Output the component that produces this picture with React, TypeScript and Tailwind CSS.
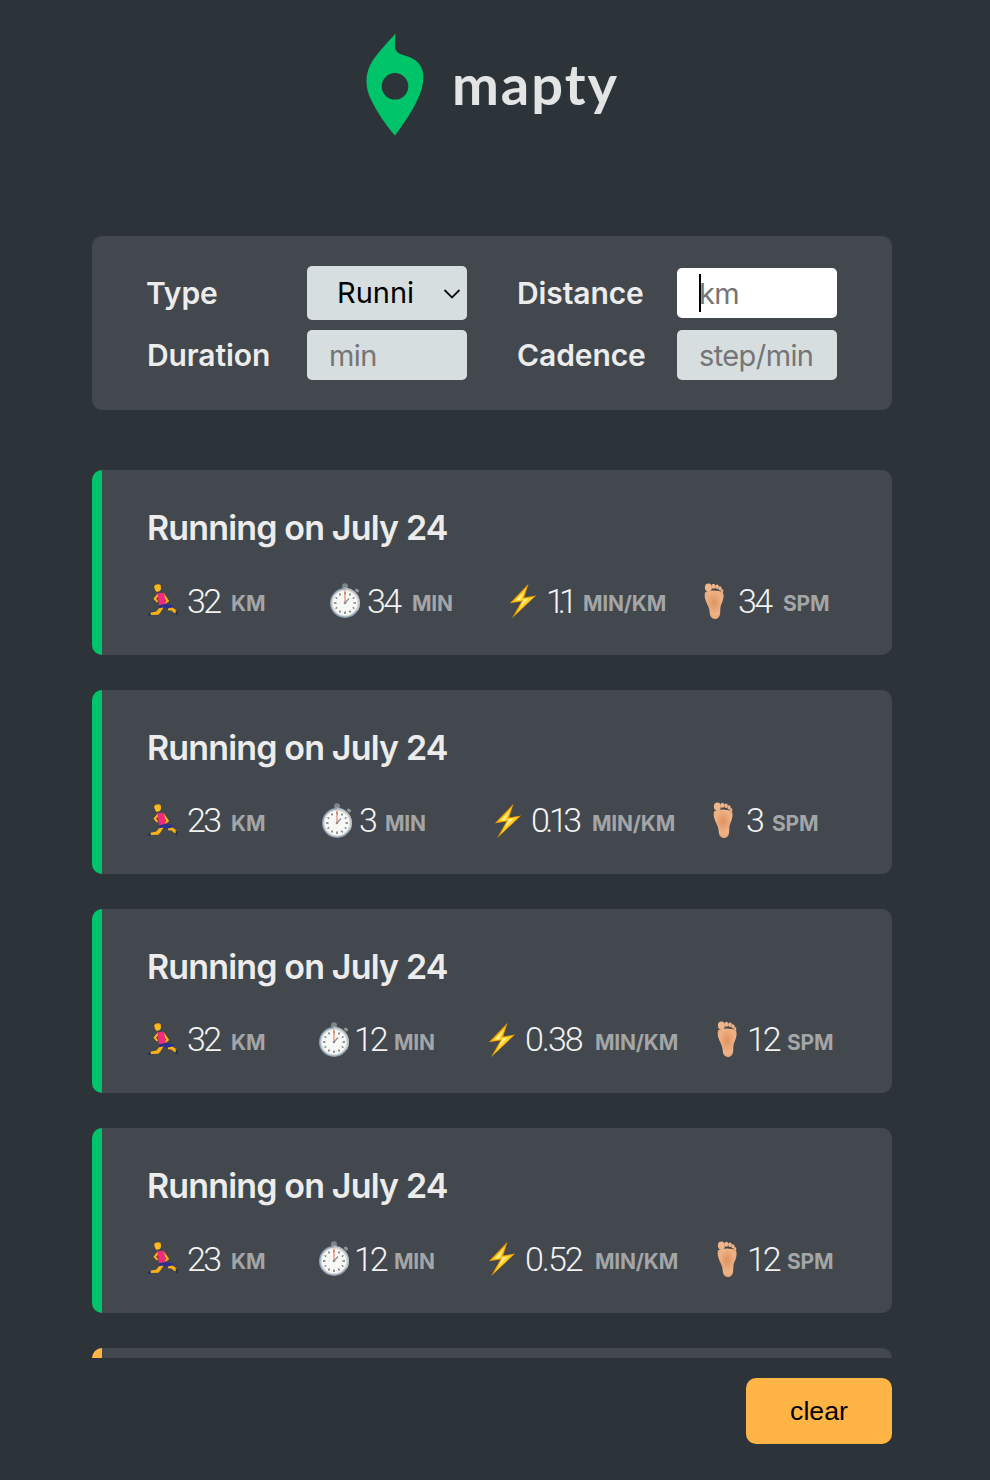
import React from "react";

const Runner = () => (
  <svg width="32" height="36" viewBox="0 0 32 36" className="block">
    <path d="M7 3.500c1-2.600 5.600-3.200 7-.8l-.4 2.600-.6 2.800-3.600.8-1.400-2.600z" fill="#f5a70f" />
    <circle cx="10.800" cy="5.200" r="3" fill="#fdb91e" />
    <path d="M10.600 10.400L6.400 15.800 9.800 19.600l1.400-1.200-2-2.800 3-3.200z" fill="#fbb117" />
    <path d="M17 10.600l5.200 7.400-4 3.200-1-1.400 2-2-3.400-5.200z" fill="#fbb117" />
    <path d="M10.400 10.200l6.600-.4 1.800 11.400-6.800 1.200z" fill="#ee2b7c" />
    <path d="M12 22.200l7-1.200 7.400 1.600.4 2.800-7.600.2-2.600-.4-4.200 1.200z" fill="#2b2f8f" />
    <path d="M21 25.400l4.600-.8 4.400 3.200-.2 2.400-2.400-.2-3-2.400-3.400-.4z" fill="#fbb117" />
    <path d="M12 25.200l4.600-.8-3.400 5.400-1.800 2-7.800.2-.2-2.200 6-1.200z" fill="#fbb117" />
    <path d="M3.400 29.800l.4 3.200-3-.2-.6-1.400z" fill="#2a3352" />
    <path d="M28.600 27.400l2 .4 .4 4.600-2.200-.6z" fill="#2a3352" />
  </svg>
);

const Stopwatch = () => (
  <svg width="32" height="36" viewBox="0 0 32 36" className="block">
    <circle cx="16" cy="3.200" r="3" fill="#7f8488" />
    <rect x="14.600" y="4" width="2.800" height="3" fill="#9a9ea1" />
    <rect x="26" y="6" width="4" height="3" rx="1" transform="rotate(40 28 7.500)" fill="#8f9498" />
    <circle cx="16" cy="20" r="15" fill="#8ba0b3" />
    <path d="M16 5a15 15 0 0 1 15 15 15 15 0 0 1-2 7.500L16 20z" fill="#b9bec2" />
    <circle cx="16" cy="20" r="13.600" fill="#dadad8" />
    <circle cx="16" cy="20" r="12.200" fill="#f8f8f6" />
    <g stroke="#6d7074" strokeWidth="1.400">
      <line x1="16" y1="9" x2="16" y2="11.500" />
      <line x1="16" y1="28.500" x2="16" y2="31" />
      <line x1="5" y1="20" x2="7.500" y2="20" />
      <line x1="24.500" y1="20" x2="27" y2="20" />
      <line x1="21.500" y1="10.500" x2="20.500" y2="12.300" />
      <line x1="25.500" y1="14.500" x2="23.700" y2="15.500" />
      <line x1="25.500" y1="25.500" x2="23.700" y2="24.500" />
      <line x1="21.500" y1="29.500" x2="20.500" y2="27.700" />
      <line x1="10.500" y1="29.500" x2="11.500" y2="27.700" />
      <line x1="6.500" y1="25.500" x2="8.300" y2="24.500" />
      <line x1="6.500" y1="14.500" x2="8.300" y2="15.500" />
      <line x1="10.500" y1="10.500" x2="11.500" y2="12.300" />
    </g>
    <line x1="16" y1="20" x2="20" y2="15.500" stroke="#8b8e91" strokeWidth="1.200" />
    <line x1="16" y1="7.500" x2="16" y2="21" stroke="#e8866c" strokeWidth="1.200" />
    <circle cx="16" cy="20" r="1.300" fill="#8c8f92" />
  </svg>
);

const Bolt = () => (
  <svg width="28" height="36" viewBox="0 0 28 36" className="block">
    <path d="M19.500 .8L.8 20.200l11.600-1.800L3 35.200 27.200 12.600l-12 2z" fill="#f09c00" />
    <path d="M17.500 4.500L3.600 19l10.700-1.700L6.400 31.500 24.800 13.800l-11.500 1.900z" fill="#ffd426" />
    <path d="M15.800 8L7 17.600l8-1.200-4.400 8 8.500-8.600-8.600 1.300z" fill="#fff3a8" />
  </svg>
);

const Foot = () => (
  <svg width="24" height="37" viewBox="0 0 24 37" className="block">
    <defs>
      <radialGradient id="sole" cx="50%" cy="42%" r="60%">
        <stop offset="0%" stopColor="#e0935f" />
        <stop offset="70%" stopColor="#efb286" />
        <stop offset="100%" stopColor="#e9a878" />
      </radialGradient>
    </defs>
    <ellipse cx="6.400" cy="4.600" rx="3.500" ry="4" fill="#f0b68a" />
    <ellipse cx="11.400" cy="3.200" rx="2" ry="2.500" fill="#f0b68a" />
    <ellipse cx="15" cy="3.800" rx="1.800" ry="2.300" fill="#f0b68a" />
    <ellipse cx="18" cy="5.400" rx="1.600" ry="2.100" fill="#f0b68a" />
    <ellipse cx="20" cy="8" rx="1.400" ry="1.900" fill="#eaa97a" />
    <path d="M3 9.500c2-2.400 14-3 18 .2 1.400 2.800.2 7.600-1.600 11.400-1.400 3-1 5.800-1.200 8.800-.2 3.600-2.400 6.100-5.200 6.100-3 0-5-2.400-5.200-5.700-.2-3.600-1-6.200-2.800-9.600C3.200 17 2 12.800 3 9.500z" fill="url(#sole)" />
  </svg>
);

// Each value: the width of its box (up to the unit), and its letter-spacing.
const valueClass: Record<string, string> = {
  "32": "w-[44px] tracking-[-2.500px]",
  "23": "w-[44px] tracking-[-2.500px]",
  "34": "w-[45px] tracking-[-2.500px]",
  "3": "w-[26px]",
  "12": "w-[38px] tracking-[-3px] ml-[-2px] mr-[2px]",
  "1.1": "w-[36px] tracking-[-7px] ml-[-1px] mr-[1px]",
  "0.13": "w-[60px] tracking-[-4.500px] ml-[-1px] mr-[1px]",
  "0.38": "w-[69px] tracking-[-2px] ml-[-1px] mr-[1px]",
  "0.52": "w-[69px] tracking-[-2px] ml-[-1px] mr-[1px]",
};

const workouts = [
  { km: "32", min: "34", pace: "1.1", spm: "34", cols: "grid-cols-[182px_180px_193px_auto]", footBox: "w-[36px]" },
  { km: "23", min: "3", pace: "0.13", spm: "3", cols: "grid-cols-[174px_173px_217px_auto]", footBox: "w-[35px]" },
  { km: "32", min: "12", pace: "0.38", spm: "12", cols: "grid-cols-[171px_170px_227px_auto]", footBox: "w-[34px]" },
  { km: "23", min: "12", pace: "0.52", spm: "12", cols: "grid-cols-[171px_170px_227px_auto]", footBox: "w-[34px]" },
];

const Detail = ({ icon, boxClass, value, unit }: { icon: React.ReactNode; boxClass: string; value: string; unit: string }) => (
  <div className="flex items-center h-[36px] whitespace-nowrap">
    <div className={`${boxClass} shrink-0`}>{icon}</div>
    <span className={`${valueClass[value]} shrink-0 font-['Roboto',sans-serif] text-[34px] leading-none font-light text-[#f2f2f2] mt-[-1px]`}>{value}</span>
    <span className="mt-[5px] text-[21px] leading-none font-bold tracking-[-0.2px] text-[#a3a5a7] uppercase">{unit}</span>
  </div>
);

const labelClass = "w-[160px] text-[30px] leading-none font-semibold tracking-[-0.1px] text-[#ececec]";

const Field = ({ label, placeholder, focused }: { label: string; placeholder: string; focused?: boolean }) => (
  <div className="flex items-center h-full">
    <label className={labelClass}>{label}</label>
    <div className="relative w-[160px] h-[50px]">
      <input
        readOnly
        placeholder={placeholder}
        className={`w-full h-full rounded-[5px] px-[22px] text-[29px] tracking-[-0.6px] outline-none placeholder:text-[#757575] ${focused ? "bg-white" : "bg-[#d6dee0]"}`}
      />
      {focused && <span className="absolute left-[22px] top-[6px] w-[2px] h-[38px] bg-black" />}
    </div>
  </div>
);

export default function App() {
  return (
    <div className="font-['Inter','Liberation_Sans',sans-serif] w-[990px] h-[1480px] bg-[#2d3439] overflow-hidden pl-[92px]">
      <div className="w-[800px] flex flex-col">
        <header className="flex items-center justify-center h-[236px] pb-[68px] pl-[1px]">
          <div className="flex items-center gap-[28px]">
            <svg width="58" height="104" viewBox="0 0 58 103" className="block">
              <path
                fillRule="evenodd"
                fill="#00c46a"
                d="M29.500 1C22 10 10 21 4 33-2 46 .5 58 5 67c5 11 15 26 24 36 8-11 18-25 23-37 4-8 6-17 5-25-1-9-7-14-15-17-7-2-12-3-13-9-.5-4 .5-9 .5-14zM29 40.500a13.300 13.300 0 1 0 0 26.600 13.300 13.300 0 0 0 0-26.600z"
              />
            </svg>
            <span className="font-['Lato',sans-serif] text-[56px] leading-none font-bold tracking-[2px] text-[#e3e4e4]">mapty</span>
          </div>
        </header>

        <form className="bg-[#42484d] rounded-[10px] h-[174px] pl-[55px] pt-[30px] grid grid-cols-[320px_320px] grid-rows-[54px_50px] gap-x-[50px] gap-y-[10px] shrink-0">
          <div className="flex items-center h-full">
            <label className={`${labelClass} ml-[-1px] mr-[1px]`}>Type</label>
            <div className="relative w-[160px] h-[54px]">
              <select className="appearance-none w-full h-full bg-[#d6dee0] rounded-[5px] pl-[30px] pr-[54px] text-[29px] tracking-[0px] text-black outline-none">
                <option>Running</option>
              </select>
              <svg width="18" height="10" viewBox="0 0 18 10" className="absolute right-[6px] top-[23px]">
                <path d="M1.500 1L9 8.500 16.500 1" fill="none" stroke="#111" strokeWidth="1.800" />
              </svg>
            </div>
          </div>
          <Field label="Distance" placeholder="km" focused />
          <Field label="Duration" placeholder="min" />
          <Field label="Cadence" placeholder="step/min" />
        </form>

        <div className="mt-[60.2px] h-[887.8px] overflow-hidden flex flex-col gap-[35px] shrink-0">
          {workouts.map((w, i) => (
            <article key={i} className="bg-[#42484d] rounded-[10px] border-l-[10px] border-[#00c46a] h-[184.4px] pl-[45px] pt-[35px] shrink-0">
              <h2 className="text-[34px] leading-[46px] font-semibold tracking-[-0.85px] text-[#ececec]">Running on July 24</h2>
              <div className={`grid ${w.cols} mt-[32px]`}>
                <Detail icon={<Runner />} boxClass="w-[40px]" value={w.km} unit="km" />
                <Detail icon={<Stopwatch />} boxClass="w-[38px]" value={w.min} unit="min" />
                <Detail icon={<Bolt />} boxClass="w-[38px]" value={w.pace} unit="min/km" />
                <Detail icon={<Foot />} boxClass={w.footBox} value={w.spm} unit="spm" />
              </div>
            </article>
          ))}
          <article className="bg-[#42484d] rounded-[10px] border-l-[10px] border-[#ffb545] h-[184.4px] shrink-0" />
        </div>

        <div className="flex justify-end mt-[20px]">
          <button className="w-[146px] h-[66px] bg-[#ffb545] rounded-[10px] font-['Liberation_Sans',sans-serif] text-[26.67px] text-black">clear</button>
        </div>
      </div>
    </div>
  );
}
